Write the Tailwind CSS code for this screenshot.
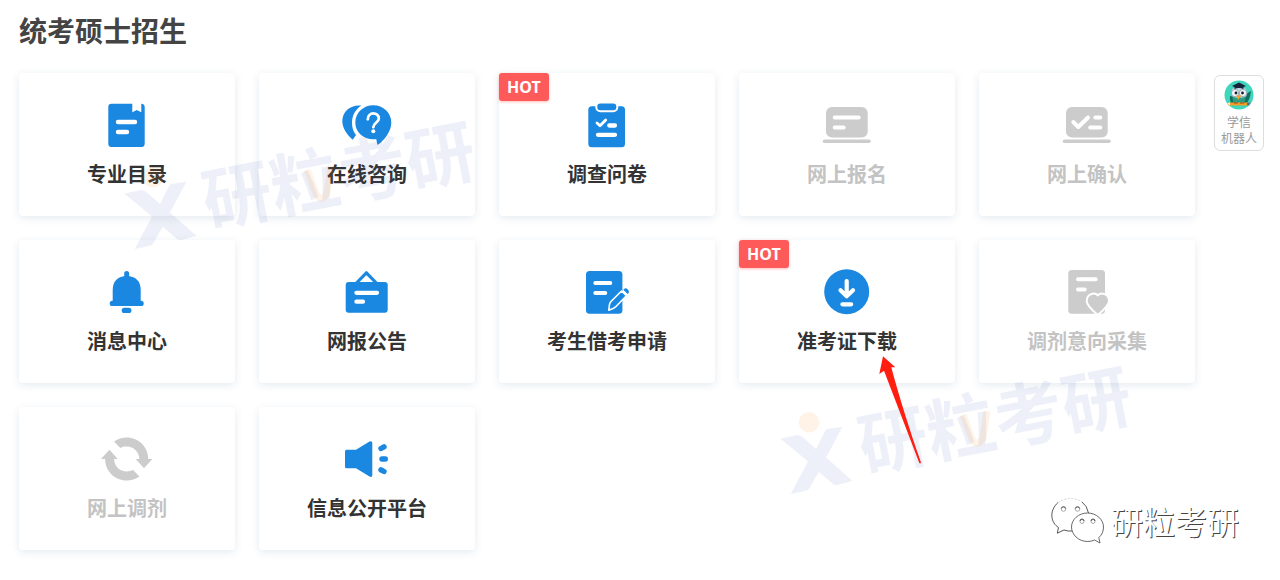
<!DOCTYPE html>
<html lang="zh-CN">
<head>
    <meta charset="UTF-8">
    <meta name="viewport" content="width=device-width, initial-scale=1.0">
    <title>统考硕士招生</title>
    <script src="https://cdn.jsdelivr.net/npm/@tailwindcss/browser@4"></script>
</head>
<body class="relative min-h-screen overflow-x-hidden bg-white font-['Noto_Sans','Noto_Sans_CJK_SC',sans-serif] text-[#333]">
    <h1 class="pl-[19px] pt-[11px] text-[28px] leading-10 font-bold text-[#444]">统考硕士招生</h1>

    <div class="mt-[22px] flex items-start gap-[19px] pl-[19px] pr-4 pb-7">
        <main class="flex-1">
            <ul class="grid grid-cols-5 gap-6 text-xl leading-7 font-bold">
                <li>
                    <a href="#" class="flex flex-col items-center rounded bg-white pt-6 pb-[27px] shadow-[0_2px_8px_rgba(30,80,120,0.12)]">
                        <svg class="size-14" viewBox="0 0 56 56" fill="#1a87e1">
                            <path d="M12.5 6.7H33.3V15.3L37.8 13L42.3 15.3V6.7Q45.7 7 45.7 10V46.5Q45.7 50 42.5 50H12.5Q9.3 50 9.3 46.5V10Q9.3 6.7 12.5 6.7Z"/>
                            <path d="M19 25H36M19 35H28" stroke="#fff" stroke-width="4.4" stroke-linecap="round"/>
                        </svg>
                        <span class="mt-2">专业目录</span>
                    </a>
                </li>
                <li>
                    <a href="#" class="flex flex-col items-center rounded bg-white pt-6 pb-[27px] shadow-[0_2px_8px_rgba(30,80,120,0.12)]">
                        <svg class="size-14" viewBox="0 0 56 56" fill="#1a87e1">
                            <path d="M22.5 8.6C16 12.5 13 19 13 26C13 31 14.5 35 17 38L13.7 42.7C8 38 3.3 31 3.3 24C3.5 14 12 7.3 22.5 8.6Z"/>
                            <path d="M34.3 8.3C24.3 8.3 16.3 16 16.3 25.5C16.3 35 24.3 42.3 34.3 42.3C35.3 42.3 36.3 42.2 37.2 42.1L38.5 48C46 43 52.3 34 52.3 25.5C52.3 16 44.3 8.3 34.3 8.3Z"/>
                            <path d="M28.8 22.3C28.8 14.5 39.8 14.8 39.8 21.5C39.8 25.6 34.3 26 34.3 30.2" fill="none" stroke="#fff" stroke-width="2.8" stroke-linecap="round"/>
                            <circle cx="34.3" cy="34.3" r="2" fill="#fff"/>
                        </svg>
                        <span class="mt-2">在线咨询</span>
                    </a>
                </li>
                <li class="relative">
                    <span class="absolute left-0 top-0 rounded-[3px] bg-[#ff5a5a] px-2 text-base leading-7 text-white shadow-[0_1px_3px_rgba(255,90,90,0.4)]">HOT</span>
                    <a href="#" class="flex flex-col items-center rounded bg-white pt-6 pb-[27px] shadow-[0_2px_8px_rgba(30,80,120,0.12)]">
                        <svg class="size-14" viewBox="0 0 56 56" fill="#1a87e1">
                            <rect x="9.3" y="9.3" width="36.7" height="41" rx="3.5"/>
                            <rect x="17.3" y="5.5" width="21" height="8.7" rx="4" stroke="#fff" stroke-width="2"/>
                            <path d="M18 26L21 28.8L26.7 23" fill="none" stroke="#fff" stroke-width="2.8" stroke-linecap="round" stroke-linejoin="round"/>
                            <path d="M30.3 28.5H36M19 37.8H36" stroke="#fff" stroke-width="4.3" stroke-linecap="round"/>
                        </svg>
                        <span class="mt-2">调查问卷</span>
                    </a>
                </li>
                <li>
                    <a href="#" aria-disabled="true" class="flex flex-col items-center rounded bg-white pt-6 pb-[27px] text-[#c3c3c3] shadow-[0_2px_8px_rgba(30,80,120,0.12)]">
                        <svg class="size-14" viewBox="0 0 56 56" fill="#ccc">
                            <rect x="7" y="10" width="41.7" height="30.5" rx="6"/>
                            <path d="M5.5 44.300H50" stroke="#ccc" stroke-width="3.5" stroke-linecap="round"/>
                            <path d="M15.7 20.5H39.7M15.7 30.5H24.7" stroke="#fff" stroke-width="4" stroke-linecap="round"/>
                        </svg>
                        <span class="mt-2">网上报名</span>
                    </a>
                </li>
                <li>
                    <a href="#" aria-disabled="true" class="flex flex-col items-center rounded bg-white pt-6 pb-[27px] text-[#c3c3c3] shadow-[0_2px_8px_rgba(30,80,120,0.12)]">
                        <svg class="size-14" viewBox="0 0 56 56" fill="#ccc">
                            <rect x="7" y="10" width="41.7" height="30.5" rx="6"/>
                            <path d="M5.5 44.300H50" stroke="#ccc" stroke-width="3.5" stroke-linecap="round"/>
                            <path d="M14.3 25L19.3 30L29 20.5" fill="none" stroke="#fff" stroke-width="4" stroke-linecap="round" stroke-linejoin="round"/>
                            <path d="M36.3 20.5H41.3M31.2 30.5H41.3" stroke="#fff" stroke-width="4" stroke-linecap="round"/>
                        </svg>
                        <span class="mt-2">网上确认</span>
                    </a>
                </li>
                <li>
                    <a href="#" class="flex flex-col items-center rounded bg-white pt-6 pb-[27px] shadow-[0_2px_8px_rgba(30,80,120,0.12)]">
                        <svg class="size-14" viewBox="0 0 56 56" fill="#1a87e1">
                            <rect x="25.2" y="7" width="5" height="9" rx="2.5"/>
                            <path d="M13.7 37V26C13.7 17 19 12 27.7 12S41.7 17 41.7 26V37Z"/>
                            <rect x="10.7" y="36.7" width="34" height="5.3" rx="2.6"/>
                            <rect x="22.7" y="43.7" width="9.7" height="5.3" rx="2.6"/>
                        </svg>
                        <span class="mt-2">消息中心</span>
                    </a>
                </li>
                <li>
                    <a href="#" class="flex flex-col items-center rounded bg-white pt-6 pb-[27px] shadow-[0_2px_8px_rgba(30,80,120,0.12)]">
                        <svg class="size-14" viewBox="0 0 56 56" fill="#1a87e1">
                            <path d="M16.5 20L27.4 8.8L38.3 20" fill="none" stroke="#1a87e1" stroke-width="3.2" stroke-linejoin="round"/>
                            <rect x="6.7" y="18" width="42" height="30.7" rx="3"/>
                            <path d="M17.4 28.8H38M17.4 37.7H24" stroke="#fff" stroke-width="4.2" stroke-linecap="round"/>
                        </svg>
                        <span class="mt-2">网报公告</span>
                    </a>
                </li>
                <li>
                    <a href="#" class="flex flex-col items-center rounded bg-white pt-6 pb-[27px] shadow-[0_2px_8px_rgba(30,80,120,0.12)]">
                        <svg class="size-14" viewBox="0 0 56 56" fill="#1a87e1">
                            <rect x="7" y="7" width="36.4" height="42.8" rx="3.5"/>
                            <path d="M16.3 19H31.3M16.3 29H26.3" stroke="#fff" stroke-width="4" stroke-linecap="round"/>
                            <path d="M29.8 46.2L30.5 40.3Q30.8 38.8 32 37.5L42.5 27L47.4 31.7L37 42.5Q35.6 43.9 34 44.6Z" stroke="#fff" stroke-width="1.6" stroke-linejoin="round"/>
                            <path d="M44.3 25.7L45.4 24.7Q47 23.7 48.8 25.5T49.7 28.8L48.7 30Z"/>
                        </svg>
                        <span class="mt-2">考生借考申请</span>
                    </a>
                </li>
                <li class="relative">
                    <span class="absolute left-0 top-0 rounded-[3px] bg-[#ff5a5a] px-2 text-base leading-7 text-white shadow-[0_1px_3px_rgba(255,90,90,0.4)]">HOT</span>
                    <a href="#" class="flex flex-col items-center rounded bg-white pt-6 pb-[27px] shadow-[0_2px_8px_rgba(30,80,120,0.12)]">
                        <svg class="size-14" viewBox="0 0 56 56" fill="none">
                            <circle cx="27.7" cy="27.7" r="22.5" fill="#1a87e1"/>
                            <path d="M27.7 17V31.5M21.5 26.2L27.7 32.2L34 26.2M23.4 40.3H32.2" stroke="#fff" stroke-width="4.2" stroke-linecap="round" stroke-linejoin="round"/>
                        </svg>
                        <span class="mt-2">准考证下载</span>
                    </a>
                </li>
                <li>
                    <a href="#" aria-disabled="true" class="flex flex-col items-center rounded bg-white pt-6 pb-[27px] text-[#c3c3c3] shadow-[0_2px_8px_rgba(30,80,120,0.12)]">
                        <svg class="size-14" viewBox="0 0 56 56" fill="#ccc">
                            <rect x="9.3" y="6" width="36.7" height="43.7" rx="3.5"/>
                            <path d="M19 15.3H36.7M19 25.5H25.7" stroke="#fff" stroke-width="4" stroke-linecap="round"/>
                            <path d="M38.8 51C34 47 27.7 41.5 27.7 37C27.7 30 35.5 27.5 38.8 31.3C42 27.5 50 30 50 37C50 41.5 43.6 47 38.8 51Z" stroke="#fff" stroke-width="2"/>
                        </svg>
                        <span class="mt-2">调剂意向采集</span>
                    </a>
                </li>
                <li>
                    <a href="#" aria-disabled="true" class="flex flex-col items-center rounded bg-white pt-6 pb-[27px] text-[#c3c3c3] shadow-[0_2px_8px_rgba(30,80,120,0.12)]">
                        <svg class="size-14" viewBox="0 0 56 56" fill="#ccc">
                            <path d="M15 10.600C19 7.800 23 6.500 27.7 6.500C39.7 6.500 49.3 16 49.3 28H53.3L45 37.300L36.7 28H40.3C40.3 21 34.7 15.500 27.7 15.500C25.3 15.500 23.3 16 21.3 16.900Z"/>
                            <path d="M15 10.600C19 7.800 23 6.500 27.7 6.500C39.7 6.500 49.3 16 49.3 28H53.3L45 37.300L36.7 28H40.3C40.3 21 34.7 15.500 27.7 15.500C25.3 15.500 23.3 16 21.3 16.900Z" transform="rotate(180 27.7 28)"/>
                        </svg>
                        <span class="mt-2">网上调剂</span>
                    </a>
                </li>
                <li>
                    <a href="#" class="flex flex-col items-center rounded bg-white pt-6 pb-[27px] shadow-[0_2px_8px_rgba(30,80,120,0.12)]">
                        <svg class="size-14" viewBox="0 0 56 56" fill="#1a87e1">
                            <path d="M7.5 18.7H17L30.5 10.5Q33.3 9.5 33.3 12V44Q33.3 46.8 30.5 45.5L17 37.3H7.5Q6 37.3 6 35.8V20.2Q6 18.7 7.5 18.7Z"/>
                            <path d="M42 17.5L45 15.8M43 28H46.3M42 38.8L45 40.5" stroke="#1a87e1" stroke-width="5.4" stroke-linecap="round"/>
                        </svg>
                        <span class="mt-2">信息公开平台</span>
                    </a>
                </li>
            </ul>
        </main>

        <a href="#" class="mt-[2px] flex w-[50px] flex-col items-center rounded-md border border-[#ddd] bg-white pt-1 pb-[3px] text-center text-xs leading-4 text-[#999]">
            <!-- owl mascot -->
            <svg class="size-[30px]" viewBox="0 0 30 30">
                <circle cx="15" cy="15" r="14.5" fill="#3fd6bd"/>
                <path d="M6 16Q5 23 10 25H20Q26 22 27 11Q22 13 21 18Z" fill="#12705f"/>
                <ellipse cx="15" cy="18" rx="6.5" ry="7" fill="#2d9d86"/>
                <path d="M8 9Q15 5 22 9L22.5 16Q18 19 15 17Q12 19 8 16Z" fill="#c5dce5"/>
                <circle cx="11" cy="13" r="3.7" fill="#eef4f8" stroke="#8090a0" stroke-width=".7"/>
                <circle cx="19" cy="13" r="3.7" fill="#eef4f8" stroke="#8090a0" stroke-width=".7"/>
                <circle cx="12" cy="13" r="1.4" fill="#161d2c"/>
                <circle cx="18.5" cy="13" r="1.4" fill="#161d2c"/>
                <path d="M12.5 16L15 14.8L17 16L14 20Z" fill="#f6a21c"/>
                <path d="M8 6L15 2.5L22 6L19.5 7V9Q15 7 10.5 9V7Z" fill="#17213a"/>
                <path d="M3 23.5L6 22.5H24L27 23.5L25 25.5H5Z" fill="#f29b25"/>
                <path d="M3 23.5L6 22.5V25.5Z" fill="#fff0d0"/>
                <path d="M23 22.5H26.5L25 25.5H23Z" fill="#347db8"/>
                <path d="M11 22V24M13 22V24M17 22V24M19 22V24" stroke="#a34a18" stroke-width="1"/>
            </svg>
            <span class="mt-[5px]">学信<br>机器人</span>
        </a>
    </div>

    <!-- brand watermarks laid over the cards -->
    <svg class="pointer-events-none absolute left-[114px] top-[115px] h-[140px] w-[390px] overflow-visible" viewBox="0 0 390 140" fill="#3a56b0" fill-opacity=".09">
        <circle cx="39" cy="62.3" r="10.3" fill="#ff8c1a" fill-opacity=".1"/>
        <path d="M10.3 78.5L26 75.3Q30 74.7 33 77.5L46 89L55 71Q56 69.2 58.5 68.8L72.5 66.7L56 97.5L82.5 120.8L67 125.3Q64.5 125.5 62 123.3L48.8 111.8L39.5 128Q38.5 130.3 36 130.8L20.7 134L38 101.5Z"/>
        <text x="94" y="112" font-size="69" font-weight="700" transform="rotate(-11 94 112)">研粒考研</text>
        <path d="M193 55L202 79Q208 88 213 78L217 51" fill="none" stroke="#ff8c1a" stroke-opacity=".1" stroke-width="7"/>
    </svg>
    <svg class="pointer-events-none absolute left-[770px] top-[360px] h-[140px] w-[390px] overflow-visible" viewBox="0 0 390 140" fill="#3a56b0" fill-opacity=".09">
        <circle cx="39" cy="62.3" r="10.3" fill="#ff8c1a" fill-opacity=".1"/>
        <path d="M10.3 78.5L26 75.3Q30 74.7 33 77.5L46 89L55 71Q56 69.2 58.5 68.8L72.5 66.7L56 97.5L82.5 120.8L67 125.3Q64.5 125.5 62 123.3L48.8 111.8L39.5 128Q38.5 130.3 36 130.8L20.7 134L38 101.5Z"/>
        <text x="94" y="112" font-size="69" font-weight="700" transform="rotate(-11 94 112)">研粒考研</text>
        <path d="M193 55L202 79Q208 88 213 78L217 51" fill="none" stroke="#ff8c1a" stroke-opacity=".1" stroke-width="7"/>
    </svg>

    <!-- pointer to the download card -->
    <svg class="pointer-events-none absolute left-[876px] top-[354px] h-[112px] w-12" viewBox="0 0 48 112" fill="#ff1e10">
        <path d="M7 2.3L19.3 13.3L15.3 13.2C23 42 33 74 45 108.5Q44.3 110 43.3 109L8 16.7L3.3 20Z"/>
    </svg>

    <div class="pointer-events-none absolute right-[41px] bottom-[34px] flex items-center gap-1.5">
        <svg class="h-12 w-[54px]" viewBox="0 2 54 48" fill="#fff" stroke="#444" stroke-width=".9">
            <path d="M38 17.5C37 8.5 29 2.5 19.5 2.5C9 2.5 1 9.5 1 19C1 24.5 3.5 29 7.5 31.5L6.3 37.2L13 34Q17 35.5 22 35" stroke="none"/>
            <path d="M7 6.5Q19.5 -1.500 31 6" fill="none" stroke="#ccc" stroke-dasharray="2 1.5"/>
            <path d="M7 6.5C-2.5 15 0 27 7.5 31.5L6.3 37.2L13 34Q17 35.5 21.5 35M31 6Q36 9.5 37.5 17" fill="none"/>
            <path d="M36.5 17C27.5 17 20.5 23.5 20.5 31S27.5 45.5 36.5 45.5Q40.5 45.5 43.5 44L49 47L47.8 41.5C51 39 52.5 35 52.5 31C52.5 23.5 45.500 17 36.500 17Z" stroke-width=".8"/>
            <g stroke="#777" stroke-width=".6">
                <circle cx="12.500" cy="13" r="2.300"/>
                <circle cx="26.500" cy="13" r="2.300"/>
                <circle cx="31" cy="25.500" r="2"/>
                <circle cx="42" cy="25.500" r="2"/>
            </g>
            <path d="M10.300 12.500A2.300 2.300 0 0 1 14.700 12.500M24.300 12.500A2.300 2.300 0 0 1 28.700 12.500M29 25A2 2 0 0 1 33 25M40 25A2 2 0 0 1 44 25" fill="none"/>
        </svg>
        <span class="text-[32px] leading-[48px] text-white [text-shadow:1px_1px_0_#444]">研粒考研</span>
    </div>
</body>
</html>
